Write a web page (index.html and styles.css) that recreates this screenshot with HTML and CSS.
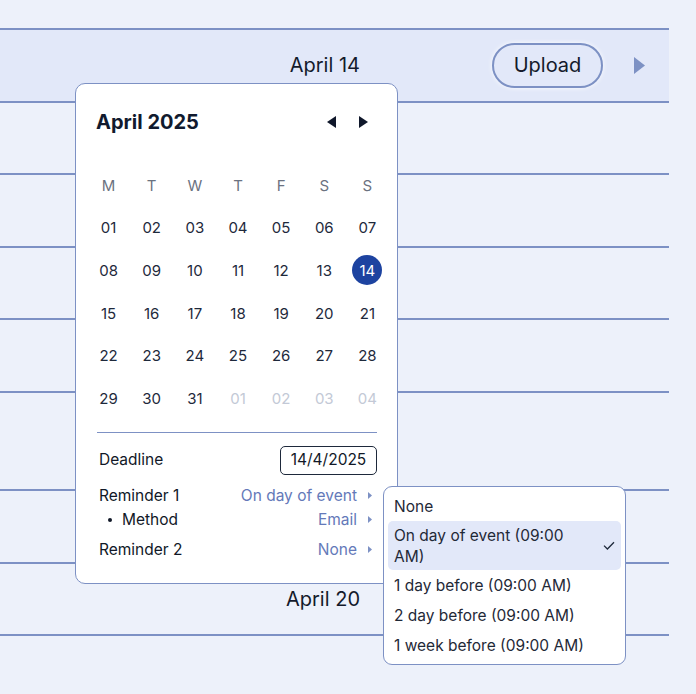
FILE: index.html
```html
<!DOCTYPE html>
<html lang="en">
<head>
<meta charset="utf-8">
<title>Calendar</title>
<link rel="stylesheet" href="styles.css">
</head>
<body>
<div class="list">
  <div class="row active">
    <div class="date">April 14</div>
    <div class="actions">
      <button class="upload">Upload</button>
      <svg class="go" width="11" height="17" viewBox="0 0 11 17"><polygon points="0,0 11,8.5 0,17" /></svg>
    </div>
  </div>
  <div class="row"><div class="date"></div><div class="actions"></div></div>
  <div class="row"><div class="date"></div><div class="actions"></div></div>
  <div class="row"><div class="date"></div><div class="actions"></div></div>
  <div class="row"><div class="date"></div><div class="actions"></div></div>
  <div class="row tall"><div class="date"></div><div class="actions"></div></div>
  <div class="row"><div class="date"></div><div class="actions"></div></div>
  <div class="row last"><div class="date">April 20</div><div class="actions"></div></div>
</div>

<div class="picker">
  <div class="picker-head">
    <div class="picker-title">April 2025</div>
    <div class="nav">
      <button class="nav-btn" aria-label="Previous month"><svg width="9" height="12" viewBox="0 0 9 12"><polygon points="9,0 9,12 0,6" /></svg></button>
      <button class="nav-btn" aria-label="Next month"><svg width="9" height="12" viewBox="0 0 9 12"><polygon points="0,0 9,6 0,12" /></svg></button>
    </div>
  </div>
  <div class="days">
    <div class="wd">M</div><div class="wd">T</div><div class="wd">W</div><div class="wd">T</div><div class="wd">F</div><div class="wd">S</div><div class="wd">S</div>
    <div class="d">01</div><div class="d">02</div><div class="d">03</div><div class="d">04</div><div class="d">05</div><div class="d">06</div><div class="d">07</div>
    <div class="d">08</div><div class="d">09</div><div class="d">10</div><div class="d">11</div><div class="d">12</div><div class="d">13</div><div class="d"><span class="sel">14</span></div>
    <div class="d">15</div><div class="d">16</div><div class="d">17</div><div class="d">18</div><div class="d">19</div><div class="d">20</div><div class="d">21</div>
    <div class="d">22</div><div class="d">23</div><div class="d">24</div><div class="d">25</div><div class="d">26</div><div class="d">27</div><div class="d">28</div>
    <div class="d">29</div><div class="d">30</div><div class="d">31</div><div class="d out">01</div><div class="d out">02</div><div class="d out">03</div><div class="d out">04</div>
  </div>
  <div class="divider"></div>
  <div class="frow deadline">
    <span class="label">Deadline</span>
    <span class="datebox">14/4/2025</span>
  </div>
  <div class="frow r1">
    <span class="label">Reminder 1</span>
    <span class="value">On day of event <svg width="4" height="7" viewBox="0 0 4 7"><polygon points="0,0 4,3.5 0,7" /></svg></span>
  </div>
  <div class="frow">
    <span class="label sub"><span class="dot"></span>Method</span>
    <span class="value">Email <svg width="4" height="7" viewBox="0 0 4 7"><polygon points="0,0 4,3.5 0,7" /></svg></span>
  </div>
  <div class="frow r2">
    <span class="label">Reminder 2</span>
    <span class="value">None <svg width="4" height="7" viewBox="0 0 4 7"><polygon points="0,0 4,3.5 0,7" /></svg></span>
  </div>
</div>

<div class="menu">
  <div class="item">None</div>
  <div class="item selected">
    <span class="item-text">On day of event (09:00 AM)</span>
    <span class="check"><svg width="12" height="9" viewBox="0 0 12 9"><polyline points="1,4.6 4.4,8 11,1.2" /></svg></span>
  </div>
  <div class="item">1 day before (09:00 AM)</div>
  <div class="item">2 day before (09:00 AM)</div>
  <div class="item">1 week before (09:00 AM)</div>
</div>
</body>
</html>
```
FILE: styles.css
```css
* { box-sizing: border-box; }

html, body {
  margin: 0;
  padding: 0;
}

body {
  width: 696px;
  height: 694px;
  overflow: hidden;
  background: #edf1fa;
  font-family: Inter, "Noto Sans", sans-serif;
  color: #111827;
  position: relative;
}

.list {
  width: 669px;
  padding-top: 28px;
}

.row {
  height: 72.6px;
  border-top: 2px solid #7d91c4;
  display: grid;
  grid-template-columns: 1fr 309px;
  align-items: center;
}

.row.tall { height: 98px; }
.row.last { border-bottom: 2px solid #7d91c4; height: 74.6px; }

.row.active { background: #e2e8f9; }

.date {
  text-align: right;
  font-size: 20px;
  color: #141a2b;
}

.actions {
  display: flex;
  align-items: center;
  padding-left: 132px;
  gap: 31px;
}

.upload {
  width: 111px;
  height: 45px;
  border: 2px solid #7d91c4;
  border-radius: 23px;
  background: transparent;
  font-family: inherit;
  font-size: 20px;
  color: #141a2b;
  padding: 0;
  box-shadow: 0 0 5px rgba(255, 255, 255, 0.9);
}

.go { fill: #7d91c4; display: block; }

/* Date picker popover */
.picker {
  position: absolute;
  left: 75px;
  top: 83px;
  width: 323px;
  background: #fff;
  border: 1px solid #7d91c4;
  border-radius: 10px;
  padding: 20px 20px 21px 20px;
}

.picker-head {
  height: 36px;
  display: flex;
  align-items: center;
  justify-content: space-between;
}

.picker-title {
  font-size: 20px;
  font-weight: 700;
  color: #111a2e;
}

.nav {
  display: flex;
  gap: 8px;
  margin-right: 2px;
}

.nav-btn {
  width: 24px;
  height: 24px;
  padding: 0;
  border: 0;
  background: transparent;
  display: flex;
  align-items: center;
  justify-content: center;
}

.nav-btn svg { fill: #0f172a; display: block; }

.days {
  margin: 24px -12px 0 -9px;
  display: grid;
  grid-template-columns: repeat(7, 1fr);
  grid-auto-rows: 42.6px;
}

.wd, .d {
  display: flex;
  align-items: center;
  justify-content: center;
  font-size: 15px;
}

.wd { color: #6b7280; }
.d { color: #1e293b; }
.d.out { color: #c3c9d6; }

.sel {
  width: 30px;
  height: 30px;
  border-radius: 50%;
  background: #1d43a0;
  color: #fff;
  display: flex;
  align-items: center;
  justify-content: center;
}

.divider {
  margin-top: 12px;
  height: 1px;
  background: #7d91c4;
  margin-left: 1px;
}

.frow {
  display: flex;
  align-items: center;
  justify-content: space-between;
  font-size: 15.5px;
  line-height: 24px;
  padding-left: 3px;
}

.frow.deadline { margin-top: 13px; }
.frow.r1 { margin-top: 9px; }
.frow.r2 { margin-top: 6px; }

.label { color: #111827; }

.label.sub {
  display: flex;
  align-items: center;
  gap: 10px;
  padding-left: 9px;
}

.dot {
  width: 4px;
  height: 4px;
  border-radius: 50%;
  background: #111827;
}

.datebox {
  width: 97px;
  height: 29px;
  border: 1.5px solid #1e293b;
  border-radius: 5px;
  display: flex;
  align-items: center;
  justify-content: center;
  color: #111827;
}

.value {
  display: flex;
  align-items: center;
  gap: 11px;
  margin-right: 5px;
  color: #6479b9;
}

.value svg { fill: #7d91c4; display: block; }

/* Dropdown menu */
.menu {
  position: absolute;
  left: 383px;
  top: 486px;
  width: 243px;
  background: #fff;
  border: 1px solid #7d91c4;
  border-radius: 9px;
  padding: 4px;
}

.item {
  min-height: 30px;
  padding: 3.5px 6px;
  font-size: 15.5px;
  line-height: 21px;
  color: #1f2937;
  display: flex;
  align-items: center;
}

.item.selected {
  background: #e2e8f9;
  border-radius: 5px;
  gap: 8px;
}

.item-text { flex: 1; }

.check {
  width: 20px;
  display: flex;
  justify-content: flex-end;
}

.check svg {
  display: block;
  fill: none;
  stroke: #1e293b;
  stroke-width: 1.3;
}
```
